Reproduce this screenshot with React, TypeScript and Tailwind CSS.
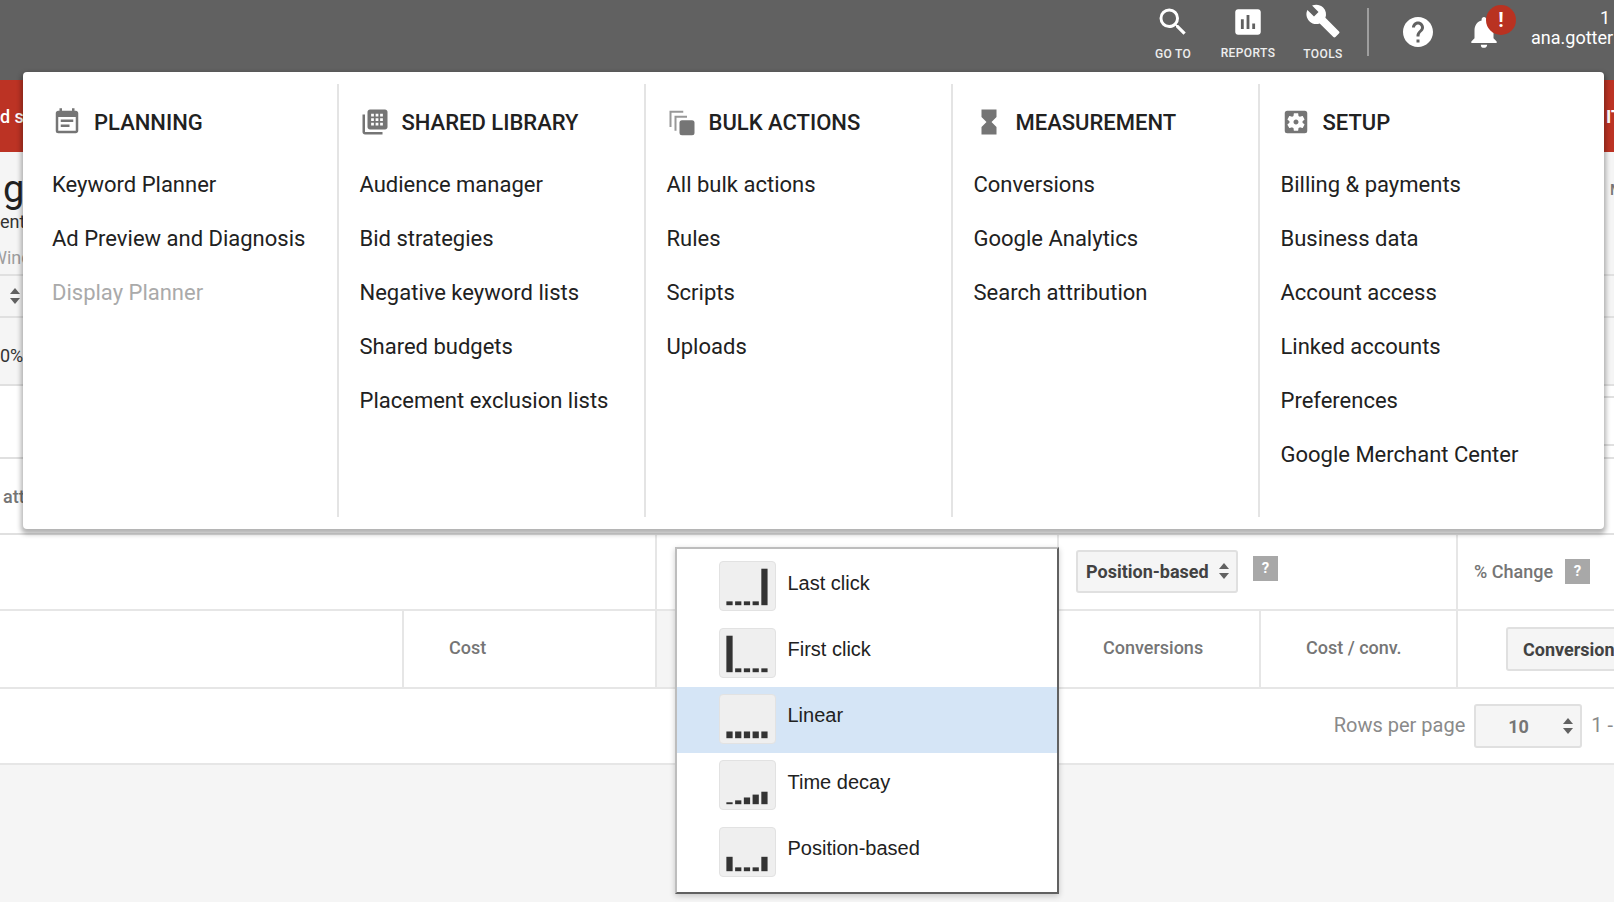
import { MdAssessment, MdBuild, MdEventNote, MdHelp, MdHourglassFull, MdNotifications, MdSearch, MdSettingsApplications } from 'react-icons/md';

const columns = [
  {
    title: 'PLANNING',
    icon: <MdEventNote size={30} color="#757575" />,
    links: ['Keyword Planner', 'Ad Preview and Diagnosis', 'Display Planner'],
  },
  {
    title: 'SHARED LIBRARY',
    icon: <LibraryIcon />,
    links: ['Audience manager', 'Bid strategies', 'Negative keyword lists', 'Shared budgets', 'Placement exclusion lists'],
  },
  {
    title: 'BULK ACTIONS',
    icon: <BulkIcon />,
    links: ['All bulk actions', 'Rules', 'Scripts', 'Uploads'],
  },
  {
    title: 'MEASUREMENT',
    icon: <MdHourglassFull size={30} color="#757575" />,
    links: ['Conversions', 'Google Analytics', 'Search attribution'],
  },
  {
    title: 'SETUP',
    icon: <MdSettingsApplications size={30} color="#757575" />,
    links: ['Billing & payments', 'Business data', 'Account access', 'Linked accounts', 'Preferences', 'Google Merchant Center'],
  },
];

const models = [
  { name: 'Last click', bars: [4, 4, 4, 4, 38] },
  { name: 'First click', bars: [38, 4, 4, 4, 4] },
  { name: 'Linear', bars: [7, 7, 7, 7, 7] },
  { name: 'Time decay', bars: [2, 4, 7, 10, 13] },
  { name: 'Position-based', bars: [15, 4, 4, 4, 15] },
];

function LibraryIcon() {
  const dots = [8.6, 12.2, 15.8];
  return (
    <svg width="30" height="30" viewBox="0 0 24 24" fill="#757575">
      <path d="M4 6H2v14c0 1.1.9 2 2 2h14v-2H4V6z" />
      <path d="M20 2H8c-1.1 0-2 .9-2 2v12c0 1.1.9 2 2 2h12c1.1 0 2-.9 2-2V4c0-1.1-.9-2-2-2z" />
      {dots.map((x) =>
        [6.4, 10, 13.6].map((y) => <rect key={`${x}-${y}`} x={x + 0.3} y={y - 1} width="2.2" height="2.2" fill="#fff" />)
      )}
    </svg>
  );
}

function BulkIcon() {
  return (
    <svg width="30" height="30" viewBox="0 0 24 24" fill="#757575">
      <path d="M2 3h11v1.6H3.6V16H2z" opacity="0.75" />
      <path d="M6 7h10v1.6H7.6V19H6z" opacity="0.75" />
      <rect x="10" y="10.5" width="12" height="12" rx="2" />
    </svg>
  );
}

function UpDown() {
  return (
    <svg width="12" height="18" viewBox="0 0 12 18" fill="#616161" className="shrink-0">
      <path d="M6 1l5 6H1z" />
      <path d="M6 17l5-6H1z" />
    </svg>
  );
}

function Hint() {
  return (
    <span className="flex h-[25px] w-[25px] shrink-0 items-center justify-center bg-[#a8a8a8] text-[15px] font-bold text-white">?</span>
  );
}

function ModelIcon({ bars }: { bars: number[] }) {
  return (
    <svg width="57" height="50" viewBox="0 0 57 50" className="-mt-[2px] shrink-0 rounded-sm border border-[#e2e2e2] bg-[#efefef]">
      {bars.map((h, i) => (
        <rect key={i} x={6.5 + i * 9.1} y={45 - h} width="6.5" height={h} fill="#333" />
      ))}
    </svg>
  );
}

export default function App() {
  return (
    <div className="relative h-[902px] w-[1614px] overflow-hidden bg-[#f5f5f5] font-['Roboto',sans-serif] text-[#212121]">
      {/* top bar */}
      <header className="flex h-[80px] items-start justify-end bg-[#616161] text-white">
        <div className="mr-[11px] flex w-[64px] flex-col items-center">
          <MdSearch size={36} className="mt-[4px]" />
          <span className="mt-[7px] text-[12px] leading-[14px] font-medium tracking-[0.3px] text-[#eeeeee]">GO TO</span>
        </div>
        <div className="mr-[11px] flex w-[64px] flex-col items-center">
          <MdAssessment size={34} className="mt-[5px]" />
          <span className="mt-[7px] text-[12px] leading-[14px] font-medium tracking-[0.4px] text-[#eeeeee]">REPORTS</span>
        </div>
        <div className="flex w-[64px] flex-col items-center">
          <MdBuild size={36} className="mt-[3px]" />
          <span className="mt-[8px] text-[12px] leading-[14px] font-medium tracking-[0.4px] text-[#eeeeee]">TOOLS</span>
        </div>
        <div className="ml-[12px] mt-[8px] h-[48px] w-[2px] bg-[#9e9e9e]" />
        <MdHelp size={36} className="ml-[31px] mt-[14px]" />
        <div className="relative ml-[29px] mt-[13px]">
          <MdNotifications size={38} />
          <span className="absolute -right-[13px] -top-[8px] flex h-[30px] w-[30px] items-center justify-center rounded-full bg-[#b93221] text-[20px] font-bold leading-none">!</span>
        </div>
        <div className="ml-[28px] mr-[3px] mt-[8px] w-[80px] text-right text-[18px] leading-[20px] whitespace-nowrap">
          <div className="pr-[1px]">1</div>
          <div className="text-left">ana.gotter</div>
        </div>
      </header>

      {/* alert band, mostly behind the menu */}
      <div className="flex h-[72px] items-center justify-between bg-[#bc3324] text-[18px] font-medium text-white">
        <span>d s</span>
        <span className="w-[8px] overflow-hidden whitespace-nowrap font-bold">IT</span>
      </div>

      {/* page heading */}
      <div className="flex h-[124px] justify-between border-b-2 border-[#e0e0e0]">
        <div className="pl-[3px]">
          <div className="mt-[17px] h-[40px] text-[38px] leading-[40px]">g</div>
          <div className="-ml-[3px] mt-[1px] h-[24px] text-[18px] leading-[24px] text-[#333]">ent</div>
          <div className="-ml-[12px] mt-[12px] h-[24px] text-[18px] leading-[24px] text-[#9e9e9e]">Wind</div>
        </div>
        <span className="mt-[27px] w-[4px] overflow-hidden text-[15px] font-medium text-[#757575]">M</span>
      </div>
      <div className="flex h-[42px] items-center border-b-2 border-[#e0e0e0] pl-[9px]">
        <UpDown />
      </div>
      <div className="flex h-[68px] items-center border-b-2 border-[#e0e0e0] pt-[8px] text-[18px] text-[#333]">0%</div>
      <div className="flex h-[73px] justify-end border-b-2 border-[#e0e0e0] bg-white">
        <div className="mt-[10px] h-[50px] w-[10px] border-y-2 border-[#e0e0e0]" />
      </div>
      <div className="flex h-[76px] items-center border-b-2 border-[#e0e0e0] bg-white pl-[3px] text-[18px] font-medium text-[#757575]">att</div>

      {/* attribution table */}
      <div className="flex h-[76px] border-b-2 border-[#e6e6e6] bg-white">
        <div className="w-[657px] shrink-0 border-r-2 border-[#e6e6e6]" />
        <div className="w-[402px] shrink-0 border-r-2 border-[#e6e6e6]" />
        <div className="flex w-[399px] shrink-0 items-center gap-[15px] border-r-2 border-[#e6e6e6] pb-[2px] pl-[17px]">
          <div className="flex h-[43px] w-[162px] shrink-0 items-center justify-between rounded-[3px] border-2 border-[#e0e0e0] bg-[#f5f5f5] pl-[8px] pr-[6px] text-[18px] font-bold text-[#424242]">
            Position-based
            <UpDown />
          </div>
          <div className="-mt-[5px]">
            <Hint />
          </div>
        </div>
        <div className="flex items-center gap-[12px] pb-[2px] pl-[16px] text-[18px] font-medium text-[#757575]">
          <span className="whitespace-nowrap">% Change</span>
          <Hint />
        </div>
      </div>
      <div className="flex h-[78px] border-b-2 border-[#e6e6e6] bg-white text-[18px] font-medium text-[#757575]">
        <div className="w-[404px] shrink-0 border-r-2 border-[#e6e6e6]" />
        <div className="flex w-[253px] shrink-0 items-center border-r-2 border-[#e6e6e6] pb-[4px] pl-[45px]">Cost</div>
        <div className="w-[402px] shrink-0 bg-[#f5f5f5]" />
        <div className="flex w-[202px] shrink-0 items-center border-r-2 border-[#e6e6e6] pb-[4px] pl-[44px]">Conversions</div>
        <div className="flex w-[197px] shrink-0 items-center border-r-2 border-[#e6e6e6] pb-[4px] pl-[45px]">Cost / conv.</div>
        <div className="flex items-center pl-[48px]">
          <div className="flex h-[44px] w-[140px] shrink-0 items-center rounded-[3px] border-2 border-[#e0e0e0] bg-[#f5f5f5] pl-[15px] text-[18px] font-bold whitespace-nowrap text-[#424242]">
            Conversions
          </div>
        </div>
      </div>
      <div className="flex h-[76px] items-center justify-end border-b-2 border-[#e6e6e6] bg-white text-[20px] text-[#8a8a8a]">
        <span className="mb-[2px]">Rows per page</span>
        <div className="ml-[9px] flex h-[44px] w-[108px] items-center justify-between rounded-[3px] border-2 border-[#e0e0e0] bg-[#f5f5f5] pl-[32px] pr-[6px] text-[18px] font-bold text-[#757575]">
          10
          <UpDown />
        </div>
        <span className="mb-[2px] ml-[9px] mr-[1px]">1 -</span>
      </div>

      {/* tools menu */}
      <div className="absolute left-[23px] top-[72px] flex h-[457px] w-[1581px] rounded-[4px] bg-white py-[12px] shadow-[0_3px_5px_2px_rgba(0,0,0,0.3)]">
        {columns.map((col, i) => (
          <div
            key={col.title}
            className={
              i === 0
                ? 'w-[316px] shrink-0 border-r-2 border-[#e4e4e4] pl-[29px] pt-[23px]'
                : i === 4
                  ? 'flex-1 pl-[20.5px] pt-[23px]'
                  : 'w-[307px] shrink-0 border-r-2 border-[#e4e4e4] pl-[20.5px] pt-[23px]'
            }
          >
            <div className="flex h-[30px] items-center gap-[12px]">
              {col.icon}
              <span className="text-[22px] font-medium whitespace-nowrap">{col.title}</span>
            </div>
            <ul className="mt-[20px]">
              {col.links.map((link) => (
                <li
                  key={link}
                  className={`flex h-[54px] items-center text-[22px] whitespace-nowrap ${link === 'Display Planner' ? 'text-[#aaaaaa]' : ''}`}
                >
                  {link}
                </li>
              ))}
            </ul>
          </div>
        ))}
      </div>

      {/* attribution model picker */}
      <div className="absolute left-[675px] top-[547px] h-[347px] w-[384px] border-2 border-t-[#bdbdbd] border-l-[#bdbdbd] border-r-[#616161] border-b-[#616161] bg-white pt-[5px] font-['Liberation_Sans',Arial,sans-serif] text-[20px] text-[#212121] shadow-[0_2px_6px_rgba(0,0,0,0.2)]">
        {models.map((m) => (
          <div key={m.name} className={`flex h-[66.4px] items-center pl-[42px] ${m.name === 'Linear' ? 'bg-[#d5e5f6]' : ''}`}>
            <ModelIcon bars={m.bars} />
            <span className="ml-[11.5px] -mt-[9px]">{m.name}</span>
          </div>
        ))}
      </div>
    </div>
  );
}
